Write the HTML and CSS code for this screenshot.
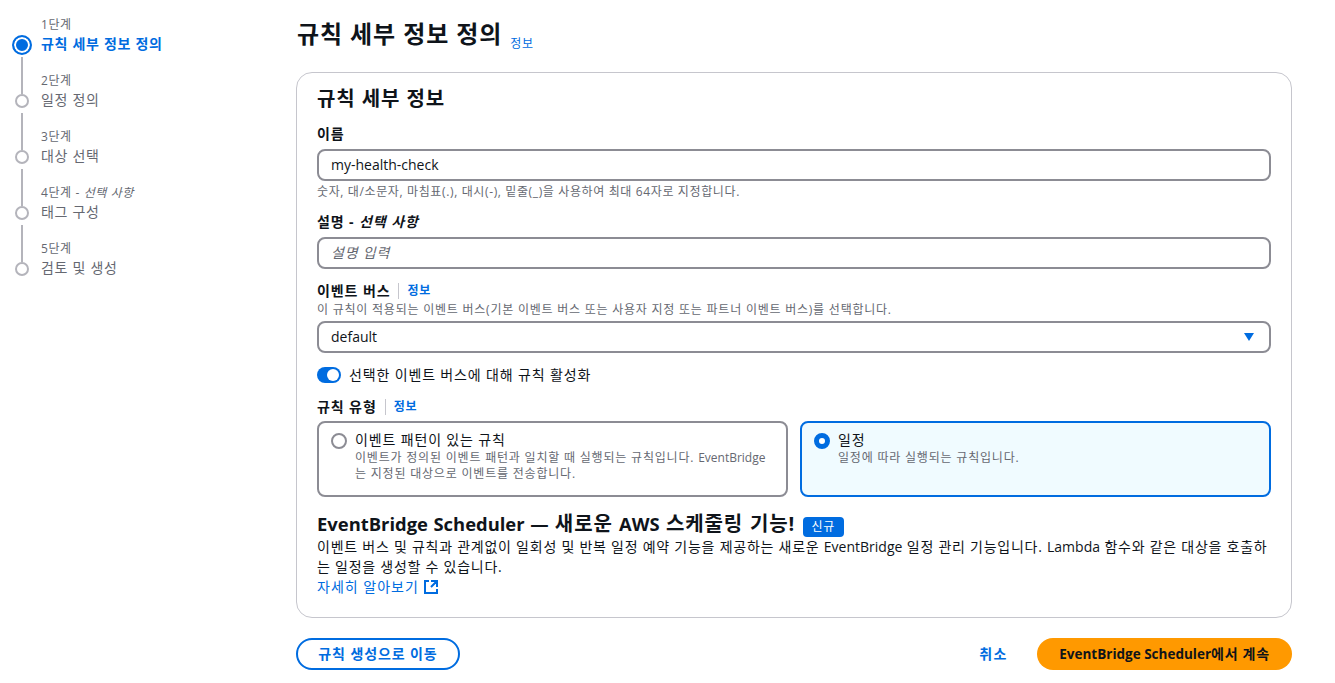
FILE: index.html
```html
<!DOCTYPE html>
<html lang="ko">
<head>
	<title>규칙 세부 정보 정의</title>
	<meta charset="utf-8">
	<link rel="stylesheet" href="styles.css">
</head>
<body>
<div class="layout">
	<!-- 단계 목록 -->
	<nav class="steps">
		<div></div>
		<div class="step-no">1단계</div>
		<div class="dot dot-active"></div>
		<div class="step-name step-name-active">규칙 세부 정보 정의</div>
		<div class="line"></div>
		<div class="step-no">2단계</div>
		<div class="dot"></div>
		<div class="step-name">일정 정의</div>
		<div class="line"></div>
		<div class="step-no">3단계</div>
		<div class="dot"></div>
		<div class="step-name">대상 선택</div>
		<div class="line"></div>
		<div class="step-no">4단계 - <i>선택 사항</i></div>
		<div class="dot"></div>
		<div class="step-name">태그 구성</div>
		<div class="line"></div>
		<div class="step-no">5단계</div>
		<div class="dot"></div>
		<div class="step-name">검토 및 생성</div>
	</nav>

	<main class="main">
		<header class="page-head">
			<h1>규칙 세부 정보 정의</h1>
			<a class="info" href="#">정보</a>
		</header>

		<section class="panel">
			<h2>규칙 세부 정보</h2>

			<div class="field">
				<label class="label">이름</label>
				<input class="input" type="text" value="my-health-check">
				<p class="help help-below">숫자, 대/소문자, 마침표(.), 대시(-), 밑줄(_)을 사용하여 최대 64자로 지정합니다.</p>
			</div>

			<div class="field">
				<label class="label">설명 - <i>선택 사항</i></label>
				<input class="input" type="text" placeholder="설명 입력">
			</div>

			<div class="field">
				<div class="label-row"><label class="label">이벤트 버스</label><a class="info info-split" href="#">정보</a></div>
				<p class="help help-top">이 규칙이 적용되는 이벤트 버스(기본 이벤트 버스 또는 사용자 지정 또는 파트너 이벤트 버스)를 선택합니다.</p>
				<div class="input select">
					<span class="en">default</span>
					<svg class="caret" width="12" height="8" viewBox="0 0 12 8"><polygon points="1,0 11,0 6,8" fill="#006ce0"/></svg>
				</div>
			</div>

			<div class="toggle-row">
				<span class="toggle"></span>
				<span>선택한 이벤트 버스에 대해 규칙 활성화</span>
			</div>

			<div class="field field-type">
				<div class="label-row"><label class="label">규칙 유형</label><a class="info info-split" href="#">정보</a></div>
				<div class="cards">
					<div class="card">
						<span class="radio"></span>
						<div>
							<div class="card-title">이벤트 패턴이 있는 규칙</div>
							<div class="card-desc">이벤트가 정의된 이벤트 패턴과 일치할 때 실행되는 규칙입니다. <span class="en">EventBridge</span>는 지정된 대상으로 이벤트를 전송합니다.</div>
						</div>
					</div>
					<div class="card card-on">
						<span class="radio radio-on"></span>
						<div>
							<div class="card-title">일정</div>
							<div class="card-desc">일정에 따라 실행되는 규칙입니다.</div>
						</div>
					</div>
				</div>
			</div>

			<div class="promo">
				<h3><span class="en">EventBridge Scheduler —</span> <span class="ko">새로운</span> <span class="en">AWS</span> <span class="ko">스케줄링 기능!</span> <span class="badge">신규</span></h3>
				<p>이벤트 버스 및 규칙과 관계없이 일회성 및 반복 일정 예약 기능을 제공하는 새로운 <span class="en">EventBridge</span> 일정 관리 기능입니다. <span class="en">Lambda</span> 함수와 같은 대상을 호출하는 일정을 생성할 수 있습니다.</p>
				<a class="more" href="#">자세히 알아보기
					<svg width="16" height="16" viewBox="0 0 16 16" fill="none" stroke="#006ce0" stroke-width="2"><path d="M14 8.01v-6H8M14.02 2 8 8.02M6 2.01H2v12h12v-3.99"/></svg>
				</a>
			</div>
		</section>

		<footer class="actions">
			<button class="btn btn-line">규칙 생성으로 이동</button>
			<div class="actions-right">
				<a class="cancel" href="#">취소</a>
				<button class="btn btn-main">EventBridge Scheduler<span class="ko-btn">에서 계속</span></button>
			</div>
		</footer>
	</main>
</div>
</body>
</html>
```

FILE: styles.css
```css
* {
	box-sizing: border-box;
}
body {
	margin: 0;
	color: #0f141a;
	background: #fff;
	font-family: "Open Sans", "Noto Sans CJK KR", sans-serif;
	font-size: 14px;
	line-height: 20px;
	letter-spacing: .7px;
}
a {
	color: #006ce0;
	text-decoration: none;
}
.en {
	letter-spacing: 0;
}
.layout {
	display: flex;
	align-items: flex-start;
}

/* 단계 */
.steps {
	display: grid;
	grid-template-columns: 20px 1fr;
	grid-auto-rows: 36px 20px;
	column-gap: 9px;
	width: 296px;
	margin-top: -1px;
	padding-left: 12px;
}
.step-no {
	align-self: end;
	color: #656871;
	font-size: 12px;
	line-height: 16px;
	letter-spacing: .6px;
	padding-bottom: 2px;
}
.step-name {
	margin-top: -1px;
	color: #656871;
}
.step-name-active {
	color: #006ce0;
	font-weight: 700;
}
.dot {
	align-self: center;
	justify-self: center;
	width: 14px;
	height: 14px;
	border: 2px solid #b4b4bb;
	border-radius: 50%;
}
.dot-active {
	width: 20px;
	height: 20px;
	border: 2px solid #006ce0;
	background: #006ce0;
	box-shadow: inset 0 0 0 2px #fff;
}
.line {
	justify-self: center;
	width: 2px;
	margin: 2px 0 -3px;
	background: #b4b4bb;
}

/* 본문 */
.main {
	width: 996px;
}
.page-head {
	display: flex;
	align-items: center;
	gap: 8px;
	height: 72px;
	padding: 0 0 0 1px;
}
h1 {
	margin: -4px 0 0;
	font-size: 24px;
	line-height: 32px;
	font-weight: 700;
	letter-spacing: .9px;
}
.info {
	font-size: 12px;
	font-weight: 700;
	line-height: 16px;
}
.page-head .info {
	padding-top: 15px;
	font-weight: 400;
}
.panel {
	height: 546px;
	padding: 15px 20px 0;
	border: 1px solid #c6c6cd;
	border-radius: 16px;
}
h2 {
	margin: 0 0 14px;
	font-size: 20px;
	line-height: 22px;
	font-weight: 700;
	letter-spacing: .9px;
}
.field {
	margin-bottom: 12px;
}
.label {
	display: block;
	font-weight: 700;
	letter-spacing: .9px;
}
.label-row {
	display: flex;
	align-items: center;
	margin-top: 1px;
}
.info-split {
	margin-left: 8px;
	padding-left: 8px;
	border-left: 1px solid #c6c6cd;
}
.help {
	margin: 0;
	color: #656871;
	font-size: 12px;
	line-height: 16px;
}
.help-below {
	margin-top: 3px;
	letter-spacing: .63px;
}
.help-top {
	margin-top: 1px;
	letter-spacing: .77px;
}
.input {
	display: block;
	width: 100%;
	height: 32px;
	margin-top: 5px;
	padding: 0 12px 2px;
	border: 2px solid #8c8c94;
	border-radius: 8px;
	outline: none;
	color: #0f141a;
	font: inherit;
}
.input::placeholder {
	color: #656871;
	font-style: italic;
	letter-spacing: .8px;
}
.select {
	display: flex;
	align-items: center;
	justify-content: space-between;
	margin-top: 3px;
	padding-bottom: 0;
}
.caret {
	margin-right: 2px;
}
.toggle-row {
	display: flex;
	align-items: center;
	gap: 8px;
	margin: 1px 0 12px;
	letter-spacing: .85px;
}
.toggle {
	position: relative;
	width: 24px;
	height: 16px;
	border-radius: 8px;
	background: #006ce0;
}
.toggle:after {
	content: '';
	position: absolute;
	top: 2px;
	right: 2px;
	width: 12px;
	height: 12px;
	border-radius: 50%;
	background: #fff;
}
.field-type {
	margin-bottom: 15px;
}
.cards {
	display: grid;
	grid-template-columns: 1fr 1fr;
	gap: 12px;
	margin-top: 4px;
}
.card {
	display: flex;
	gap: 8px;
	height: 76px;
	padding: 8px 12px;
	border: 2px solid #8c8c94;
	border-radius: 8px;
}
.card-on {
	border-color: #006ce0;
	background: #f0fbff;
}
.radio {
	flex: none;
	width: 16px;
	height: 16px;
	margin-top: 2px;
	border: 2px solid #8c8c94;
	border-radius: 50%;
	background: #fff;
}
.radio-on {
	border: 5px solid #006ce0;
}
.card-title {
	margin-top: -1px;
	letter-spacing: .85px;
}
.card-desc {
	padding-right: 8px;
	color: #656871;
	font-size: 12px;
	line-height: 16px;
	letter-spacing: .8px;
}
.promo h3 {
	margin: 0;
	font-size: 18.4px;
	line-height: 24px;
	font-weight: 700;
	word-spacing: .8px;
}
.promo .ko {
	font-size: 20px;
	letter-spacing: .9px;
}
.badge {
	display: inline-block;
	margin-left: 1px;
	padding: 2px 9px;
	border-radius: 4px;
	background: #006ce0;
	color: #fff;
	font-size: 12px;
	line-height: 16px;
	font-weight: 400;
	vertical-align: 0;
}
.promo p {
	margin: 0;
	line-height: 20px;
	letter-spacing: .75px;
}
.more {
	display: inline-flex;
	align-items: center;
	gap: 4px;
	letter-spacing: 1px;
}

/* 하단 버튼 */
.actions {
	display: flex;
	align-items: center;
	justify-content: space-between;
	margin-top: 20px;
}
.actions-right {
	display: flex;
	align-items: center;
	gap: 29px;
}
.cancel {
	font-weight: 700;
	letter-spacing: 1.5px;
}
.btn {
	height: 32px;
	border-radius: 16px;
	font-family: inherit;
	font-size: 14px;
	font-weight: 700;
	line-height: 20px;
}
.btn-line {
	width: 164px;
	border: 2px solid #006ce0;
	background: #fff;
	color: #006ce0;
	letter-spacing: .9px;
}
.btn-main {
	width: 255px;
	border: 0;
	background: #ff9900;
	color: #0f141a;
	font-size: 13.5px;
}
.ko-btn {
	font-size: 14px;
	letter-spacing: .7px;
}
```
